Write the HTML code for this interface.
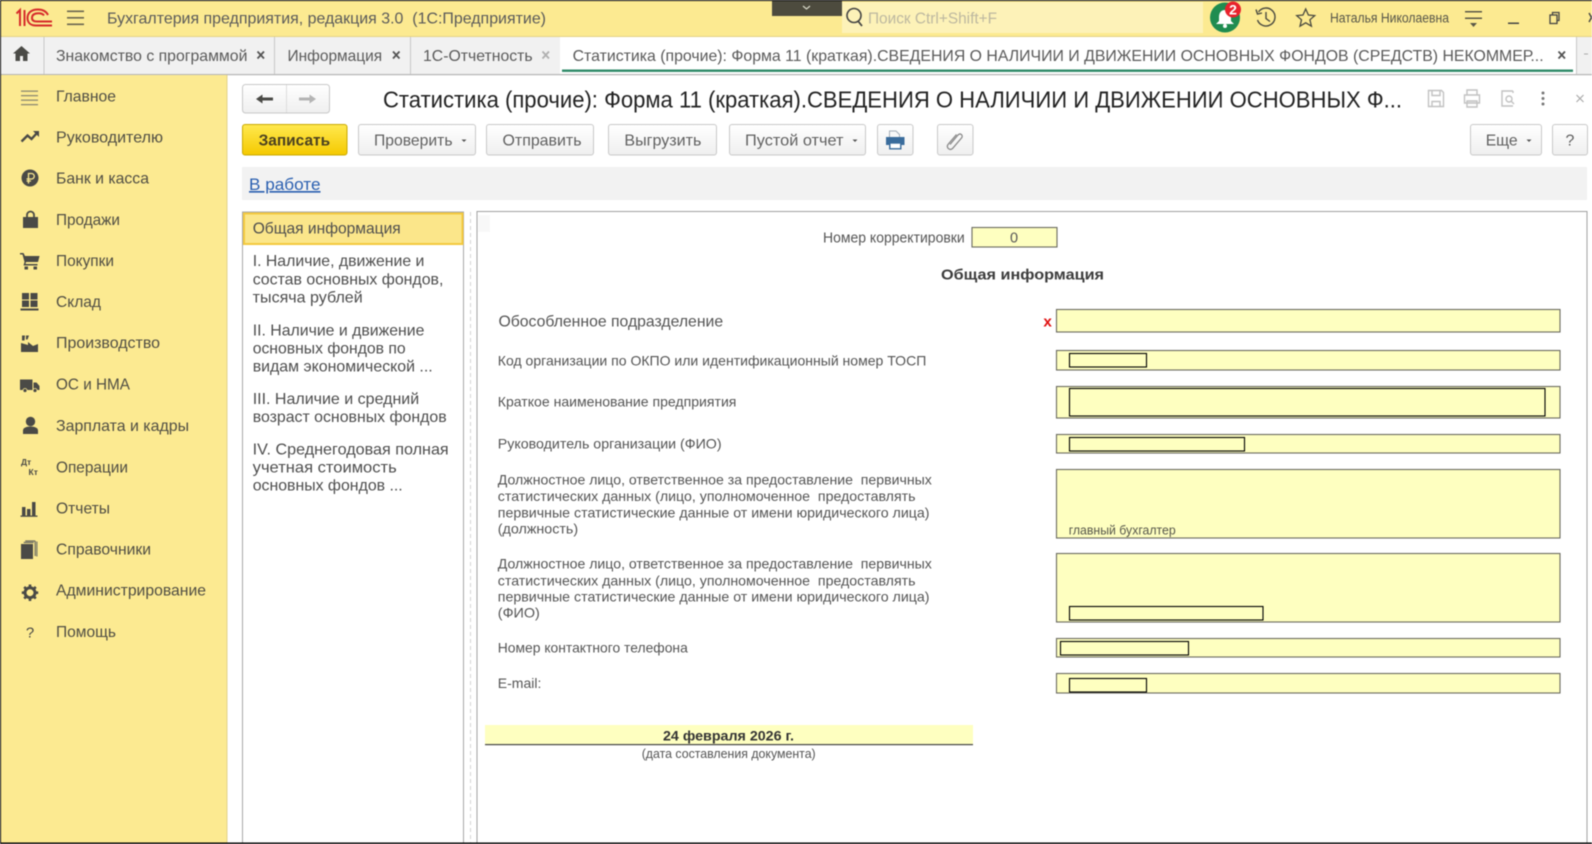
<!DOCTYPE html>
<html lang="ru"><head><meta charset="utf-8"><title>Статистика (прочие): Форма 11 (краткая)</title>
<style>
html,body{margin:0;padding:0;width:1592px;height:844px;overflow:hidden;background:#fff}
svg{display:block;position:absolute;left:0;top:0;filter:blur(.45px)}
text{font-family:"Liberation Sans",sans-serif;white-space:pre;fill:#4b4b45}
.s{font-size:16px;fill:#504e44}
.t{font-size:16px;fill:#5a5a5a}
.b{font-size:16px;fill:#606060}
.l{font-size:16px;fill:#4e4e4e}
.f{font-size:14px;fill:#555}
.i{fill:#4a4a46}
.y{fill:#feffc0;stroke:#6a6a60;stroke-width:1.1}
.r{fill:none;stroke:#000;stroke-width:1.1}
.btn{fill:url(#gb);stroke:#c8c8c8;stroke-width:1}
</style></head><body>
<svg width="1592" height="844" viewBox="0 0 1592 844" xmlns="http://www.w3.org/2000/svg">
<defs>
<linearGradient id="gb" x1="0" y1="0" x2="0" y2="1"><stop offset="0" stop-color="#fff"/><stop offset="1" stop-color="#efefef"/></linearGradient>
<linearGradient id="gy" x1="0" y1="0" x2="0" y2="1"><stop offset="0" stop-color="#ffe94f"/><stop offset="1" stop-color="#f5c900"/></linearGradient>
</defs>
<rect width="1592" height="844" fill="#fff"/>
<!-- header -->
<rect x="0" y="0" width="1592" height="36" fill="#fcea91"/>
<rect x="0" y="36" width="1592" height="1" fill="#e4d286"/>
<g fill="none" stroke="#d62b2b" stroke-width="2">
<path d="M16.500 13.500l3.500-3.500v16M24.500 10v16"/>
<path d="M48 15C46 11 42 9.500 38 9.500C31 9.500 27.500 13 27.500 18C27.500 23 31 25.500 36 25.500H52"/>
<path d="M44 15.500C43 14 41 13.200 38.500 13.200C34 13.200 32 15 32 18C32 20.500 34 21.500 37 21.500H52"/>
</g>
<g fill="#6a6650"><rect x="67" y="10.500" width="17" height="1.600"/><rect x="67" y="17" width="17" height="1.600"/><rect x="67" y="23.500" width="17" height="1.600"/></g>
<text x="107" y="23.500" class="t" textLength="439" lengthAdjust="spacingAndGlyphs">Бухгалтерия предприятия, редакция 3.0  (1С:Предприятие)</text>
<rect x="772" y="0" width="70" height="16" fill="#4d4b3e"/>
<path d="M803 6l3.500 3 3.500-3" fill="none" stroke="#d8d8c8" stroke-width="1.200"/>
<rect x="842" y="2" width="361" height="31" fill="#fdf2b8"/>
<circle cx="854" cy="15.500" r="7" fill="none" stroke="#444" stroke-width="1.600"/><path d="M858 21l4 5" stroke="#444" stroke-width="1.800"/>
<text x="868" y="23.500" style="font-size:16px;fill:#bdb8a0" textLength="129" lengthAdjust="spacingAndGlyphs">Поиск Ctrl+Shift+F</text>
<circle cx="1225" cy="17.500" r="15" fill="#1e8c50"/>
<path d="M1225 10c-4 0-6 3-6 7v4l-3 3h18l-3-3v-4c0-4-2-7-6-7z" fill="#fff"/><circle cx="1225" cy="26" r="2" fill="#fff"/>
<circle cx="1233" cy="9.500" r="8" fill="#e8222c"/>
<text x="1233" y="14.500" text-anchor="middle" style="font-size:14px;font-weight:bold;fill:#fff">2</text>
<g fill="none" stroke="#4a4a40" stroke-width="1.400"><path d="M1258.500 12a9 9 0 1 1-1 8"/><path d="M1256 9.500l1.500 4.500 4.500-1"/><path d="M1266 12v6.500l4 3"/></g>
<path d="M1305.700 9l2.700 6 6.300.6-4.800 4.200 1.500 6.400-5.700-3.400-5.700 3.400 1.500-6.400-4.800-4.200 6.300-.6z" fill="none" stroke="#4a4a40" stroke-width="1.300"/>
<text x="1330" y="22.500" style="font-size:13.500px;fill:#57564a" textLength="119" lengthAdjust="spacingAndGlyphs">Наталья Николаевна</text>
<g fill="#5a5848"><rect x="1465" y="11" width="17" height="1.500"/><rect x="1465" y="17.500" width="17" height="1.500"/><path d="M1470 23h7l-3.500 4z"/></g>
<rect x="1508" y="22.500" width="11" height="1.500" fill="#444"/>
<g fill="none" stroke="#444" stroke-width="1.300"><rect x="1550" y="15" width="7" height="8.500"/><path d="M1552.500 15v-2.500h6.500v8h-2"/></g>
<path d="M1589 13l5 9M1594 13l-5 9" stroke="#444" stroke-width="1.400"/>
<!-- tabs -->
<rect x="0" y="37" width="1592" height="37" fill="#f1f1f1"/>
<rect x="560" y="37" width="1016" height="37" fill="#fff"/>
<rect x="0" y="74" width="1592" height="1.200" fill="#b5b5b5"/>
<g fill="#c8c8c8"><rect x="43.500" y="37" width="1" height="37"/><rect x="274" y="37" width="1" height="37"/><rect x="410" y="37" width="1" height="37"/><rect x="1576" y="37" width="1" height="37"/></g>
<path d="M21.500 46l-8.500 7.500h2.500v7.500h4.500v-5h3v5h4.500v-7.500h2.500z" class="i"/>
<text x="56" y="61" class="t" textLength="191.400" lengthAdjust="spacingAndGlyphs">Знакомство с программой</text>
<text x="287.500" y="61" class="t" textLength="94.600" lengthAdjust="spacingAndGlyphs">Информация</text>
<text x="423" y="61" class="t" textLength="109.600" lengthAdjust="spacingAndGlyphs">1С-Отчетность</text>
<text x="572.600" y="61" class="t" textLength="971" lengthAdjust="spacingAndGlyphs">Статистика (прочие): Форма 11 (краткая).СВЕДЕНИЯ О НАЛИЧИИ И ДВИЖЕНИИ ОСНОВНЫХ ФОНДОВ (СРЕДСТВ) НЕКОММЕР...</text>
<g fill="none" stroke-width="1.800"><path d="M257.500 51.500l6.500 7M264 51.500l-6.500 7" stroke="#555"/><path d="M393 51.500l6.500 7M399.500 51.500l-6.500 7" stroke="#555"/><path d="M542.500 51.500l6.500 7M549 51.500l-6.500 7" stroke="#b0b0b0"/><path d="M1558.500 51.500l6.500 7M1565 51.500l-6.500 7" stroke="#555"/></g>
<rect x="562" y="69.500" width="1011" height="2.400" fill="#2f8a68"/>
<path d="M1584 54h4" stroke="#aaa" stroke-width="1"/>
<!-- sidebar -->
<rect x="0" y="75" width="226.500" height="769" fill="#fcea91"/>
<rect x="226.500" y="75" width="1" height="769" fill="#e2d28c"/>
<g fill="#8d8a72"><rect x="21" y="90.500" width="17" height="1.300"/><rect x="21" y="95" width="17" height="1.300"/><rect x="21" y="99.500" width="17" height="1.300"/><rect x="21" y="104" width="17" height="1.300"/></g>
<text x="56" y="101.500" class="s" textLength="60" lengthAdjust="spacingAndGlyphs">Главное</text>
<path d="M21.500 141.500l6-6 4 3.500 5-5.500" fill="none" stroke="#4a4a46" stroke-width="2.400"/><path d="M33 131h6v6z" class="i"/>
<text x="56" y="142.500" class="s" textLength="107" lengthAdjust="spacingAndGlyphs">Руководителю</text>
<circle cx="30" cy="178" r="8.500" class="i"/><path d="M28.500 183.500v-10h3a2.600 2.600 0 0 1 0 5.500h-5M26.500 181h4.500" fill="none" stroke="#fcea91" stroke-width="1.300"/>
<text x="56" y="183.500" class="s" textLength="93" lengthAdjust="spacingAndGlyphs">Банк и касса</text>
<path d="M23 217h15v11h-15z" class="i"/><path d="M27 218v-3a3.500 3.500 0 0 1 7 0v3" fill="none" stroke="#4a4a46" stroke-width="1.800"/>
<text x="56" y="225" class="s" textLength="64" lengthAdjust="spacingAndGlyphs">Продажи</text>
<path d="M20 253h3.500l1.500 3h14.500l-1.500 6h-12l-.5 2h12v1.500h-14l1-3.500-2-7.500h-2.500z" class="i"/><path d="M25 256h14.500l-2 6h-11z" class="i"/><rect x="24.500" y="266.500" width="3.500" height="3" class="i"/><rect x="33.500" y="266.500" width="3.500" height="3" class="i"/>
<text x="56" y="266" class="s" textLength="58" lengthAdjust="spacingAndGlyphs">Покупки</text>
<g class="i"><rect x="22" y="293" width="7" height="6.500"/><rect x="30.500" y="293" width="7" height="6.500"/><rect x="22" y="300.500" width="7" height="6.500"/><rect x="30.500" y="300.500" width="7" height="6.500"/><rect x="20.500" y="308.500" width="18" height="2"/></g>
<text x="56" y="307" class="s" textLength="45" lengthAdjust="spacingAndGlyphs">Склад</text>
<path d="M21 352v-9l7 2v-3l5 4 5-2v8zM22 335.500h3l-.5 5h-2.500zM26 335.500h3l-1.500 4h-1.500z" class="i"/>
<text x="56" y="348" class="s" textLength="104" lengthAdjust="spacingAndGlyphs">Производство</text>
<path d="M20 379.500h12.500v10.500h-12.500zM33.500 382.500h3l3 3.500v4h-6z" class="i"/><circle cx="25" cy="390.500" r="2" class="i" stroke="#fcea91" stroke-width=".8"/><circle cx="35" cy="390.500" r="2" class="i" stroke="#fcea91" stroke-width=".8"/>
<text x="56" y="389.500" class="s" textLength="74" lengthAdjust="spacingAndGlyphs">ОС и НМА</text>
<circle cx="30.500" cy="421.500" r="4.700" class="i"/><path d="M23 434v-3.500c0-2.500 3-4 7.500-4s7.500 1.500 7.500 4v3.500z" class="i"/>
<text x="56" y="431" class="s" textLength="133" lengthAdjust="spacingAndGlyphs">Зарплата и кадры</text>
<text x="21" y="465" style="font-size:8.500px;font-weight:bold;fill:#4a4a46">Дт</text>
<text x="28.500" y="475" style="font-size:8.500px;font-weight:bold;fill:#4a4a46">Кт</text>
<text x="56" y="472.500" class="s" textLength="72" lengthAdjust="spacingAndGlyphs">Операции</text>
<g class="i"><rect x="22" y="507" width="3.500" height="8.500"/><rect x="27" y="509" width="3.500" height="6.500"/><rect x="32" y="502" width="3.500" height="13.500"/><rect x="20.500" y="515.500" width="17" height="1.300"/></g>
<text x="56" y="513.500" class="s" textLength="54" lengthAdjust="spacingAndGlyphs">Отчеты</text>
<path d="M21 544h12v15h-12z" class="i"/><path d="M33.700 542.500h-10M35.200 541v15M35.200 541h-10" fill="none" stroke="#6a6a60" stroke-width="1.200"/><rect x="36.300" y="541.500" width="1.200" height="15" fill="#7a7a68"/>
<text x="56" y="554.500" class="s" textLength="95" lengthAdjust="spacingAndGlyphs">Справочники</text>
<circle cx="30" cy="592.700" r="5" fill="none" stroke="#4a4a46" stroke-width="3"/><g stroke="#4a4a46" stroke-width="2.600"><path d="M30 584.500v3M30 598v3M21.800 592.700h3M35.200 592.700h3M24.200 586.900l2.100 2.100M33.700 596.400l2.100 2.100M24.200 598.500l2.100-2.100M33.700 589l2.100-2.100"/></g>
<text x="56" y="595.500" class="s" textLength="150" lengthAdjust="spacingAndGlyphs">Администрирование</text>
<text x="30" y="637.500" text-anchor="middle" style="font-size:15px;fill:#4a4a46">?</text>
<text x="56" y="637" class="s" textLength="60" lengthAdjust="spacingAndGlyphs">Помощь</text>
<!-- command bar -->
<rect x="242.500" y="84.500" width="87" height="28.500" rx="3" class="btn"/><rect x="286" y="85" width="1" height="27.500" fill="#ddd"/>
<path d="M256 99l6.500-4.500v3h10.500v3h-10.500v3z" fill="#4a4a46"/><path d="M316 99l-6.500-4.500v3h-10.500v3h10.500v3z" fill="#b4b4b4"/>
<text x="383" y="107.500" style="font-size:23.500px;fill:#222" textLength="1019" lengthAdjust="spacingAndGlyphs">Статистика (прочие): Форма 11 (краткая).СВЕДЕНИЯ О НАЛИЧИИ И ДВИЖЕНИИ ОСНОВНЫХ Ф...</text>
<g fill="none" stroke="#c2c2c2" stroke-width="1.400"><path d="M1428.500 90.500h13l2 2v14h-15zM1432 90.500v5h8v-5M1432 106.500v-5h8v5"/><path d="M1467 95v-5h10v5M1464.500 95h15v8h-15zM1467 101h10v6h-10z"/><path d="M1513 91h-11v15h11M1513 91v2"/><circle cx="1509" cy="99" r="3"/><path d="M1511 101l3 3"/></g>
<g fill="#777"><circle cx="1543" cy="93" r="1.500"/><circle cx="1543" cy="98.500" r="1.500"/><circle cx="1543" cy="104" r="1.500"/></g>
<path d="M1576.500 95l7 7M1583.500 95l-7 7" stroke="#aaa" stroke-width="1.200"/>
<!-- buttons -->
<rect x="242.500" y="124.500" width="104.500" height="30.500" rx="2.500" fill="url(#gy)" stroke="#c9a900"/>
<text x="258.600" y="145.500" style="font-size:16px;font-weight:bold;fill:#4a4020" textLength="71.500" lengthAdjust="spacingAndGlyphs">Записать</text>
<rect x="358.500" y="124.500" width="117" height="30.500" rx="2.500" class="btn"/>
<text x="374" y="145.500" class="b" textLength="78.500" lengthAdjust="spacingAndGlyphs">Проверить</text><path d="M461.500 139.500h5l-2.500 2.500z" fill="#555"/>
<rect x="486.500" y="124.500" width="107" height="30.500" rx="2.500" class="btn"/>
<text x="502.500" y="145.500" class="b" textLength="79" lengthAdjust="spacingAndGlyphs">Отправить</text>
<rect x="608.500" y="124.500" width="108" height="30.500" rx="2.500" class="btn"/>
<text x="624.400" y="145.500" class="b" textLength="77" lengthAdjust="spacingAndGlyphs">Выгрузить</text>
<rect x="729.500" y="124.500" width="136" height="30.500" rx="2.500" class="btn"/>
<text x="745" y="145.500" class="b" textLength="98.500" lengthAdjust="spacingAndGlyphs">Пустой отчет</text><path d="M852.500 139.500h5l-2.500 2.500z" fill="#555"/>
<rect x="877.500" y="124.500" width="35.500" height="30.500" rx="2.500" class="btn"/>
<path d="M889.500 137.500v-6.500h6.500l3.500 3.500v3" fill="#f8f8f8" stroke="#a4aeb8"/><path d="M886 137h18.500v8h-3.500v-2h-11.500v2h-3.500z" fill="#3a6c9c"/><rect x="889.800" y="143" width="11" height="5.800" fill="#fff" stroke="#3a6c9c" stroke-width="1.400"/>
<rect x="937.500" y="124.500" width="35.500" height="30.500" rx="2.500" class="btn"/>
<path d="M950 144.500l8-9.500c2.500-2.500 5.500.5 3.500 3l-9 10.500c-3 2.500-6.500-1-4.500-4l8.500-10" fill="none" stroke="#8a8a8a" stroke-width="1.300"/>
<rect x="1470.500" y="124.500" width="71" height="30.500" rx="2.500" class="btn"/>
<text x="1485.700" y="145.500" class="b" textLength="32" lengthAdjust="spacingAndGlyphs">Еще</text><path d="M1526.500 139.500h5l-2.500 2.500z" fill="#555"/>
<rect x="1552.500" y="124.500" width="35" height="30.500" rx="2.500" class="btn"/>
<text x="1570" y="145.500" text-anchor="middle" class="b">?</text>
<!-- status -->
<rect x="242" y="167" width="1345" height="33" fill="#f2f2f2"/>
<text x="249" y="190" style="font-size:16.500px;fill:#2a5fb0;text-decoration:underline" textLength="71.500" lengthAdjust="spacingAndGlyphs">В работе</text>
<!-- left list -->
<rect x="242.500" y="212" width="221" height="640" fill="#fff" stroke="#a8a8a8"/>
<rect x="244" y="213.500" width="218.500" height="30.500" fill="#fbe68a" stroke="#f3c93e" stroke-width="2"/>
<text x="252.700" y="233.500" class="l" textLength="148" lengthAdjust="spacingAndGlyphs">Общая информация</text>
<text x="252.700" y="266" class="l" textLength="171.700" lengthAdjust="spacingAndGlyphs">I. Наличие, движение и</text>
<text x="252.700" y="284.500" class="l" textLength="190.700" lengthAdjust="spacingAndGlyphs">состав основных фондов,</text>
<text x="252.700" y="302.500" class="l" textLength="110" lengthAdjust="spacingAndGlyphs">тысяча рублей</text>
<text x="252.700" y="335.500" class="l" textLength="171.700" lengthAdjust="spacingAndGlyphs">II. Наличие и движение</text>
<text x="252.700" y="353.500" class="l" textLength="153" lengthAdjust="spacingAndGlyphs">основных фондов по</text>
<text x="252.700" y="371.500" class="l" textLength="180" lengthAdjust="spacingAndGlyphs">видам экономической ...</text>
<text x="252.700" y="404" class="l" textLength="166.500" lengthAdjust="spacingAndGlyphs">III. Наличие и средний</text>
<text x="252.700" y="422" class="l" textLength="194" lengthAdjust="spacingAndGlyphs">возраст основных фондов</text>
<text x="252.700" y="454.500" class="l" textLength="196" lengthAdjust="spacingAndGlyphs">IV. Среднегодовая полная</text>
<text x="252.700" y="472.500" class="l" textLength="144" lengthAdjust="spacingAndGlyphs">учетная стоимость</text>
<text x="252.700" y="490.500" class="l" textLength="150" lengthAdjust="spacingAndGlyphs">основных фондов ...</text>
<path d="M470.500 212v632" stroke="#d4d4d4" stroke-dasharray="4 3"/>
<!-- panel -->
<rect x="477" y="211.500" width="1110" height="640" fill="#fff" stroke="#a0a0a0"/>
<rect x="478" y="215" width="12" height="17" fill="#f8f8f8"/>
<text x="823" y="242.500" class="f" style="font-size:14.500px" textLength="141.700" lengthAdjust="spacingAndGlyphs">Номер корректировки</text>
<rect x="972" y="227.500" width="85" height="19.500" class="y"/>
<text x="1014" y="242.500" text-anchor="middle" class="f" style="font-size:14.500px">0</text>
<text x="941" y="279.500" style="font-size:15px;font-weight:bold;fill:#3c3c3c" textLength="163" lengthAdjust="spacingAndGlyphs">Общая информация</text>
<text x="498.500" y="326.500" class="f" style="font-size:16px" textLength="224.600" lengthAdjust="spacingAndGlyphs">Обособленное подразделение</text>
<text x="497.800" y="365.500" class="f" textLength="428.500" lengthAdjust="spacingAndGlyphs">Код организации по ОКПО или идентификационный номер ТОСП</text>
<text x="497.800" y="406.500" class="f" textLength="238.600" lengthAdjust="spacingAndGlyphs">Краткое наименование предприятия</text>
<text x="497.800" y="448.500" class="f" textLength="223.800" lengthAdjust="spacingAndGlyphs">Руководитель организации (ФИО)</text>
<text x="497.800" y="484.500" class="f" textLength="434" lengthAdjust="spacingAndGlyphs">Должностное лицо, ответственное за предоставление  первичных</text>
<text x="497.800" y="501" class="f" textLength="417.700" lengthAdjust="spacingAndGlyphs">статистических данных (лицо, уполномоченное  предоставлять</text>
<text x="497.800" y="517.500" class="f" textLength="431.700" lengthAdjust="spacingAndGlyphs">первичные статистические данные от имени юридического лица)</text>
<text x="497.800" y="533.500" class="f" textLength="80.300" lengthAdjust="spacingAndGlyphs">(должность)</text>
<text x="497.800" y="568.500" class="f" textLength="434" lengthAdjust="spacingAndGlyphs">Должностное лицо, ответственное за предоставление  первичных</text>
<text x="497.800" y="585.500" class="f" textLength="417.700" lengthAdjust="spacingAndGlyphs">статистических данных (лицо, уполномоченное  предоставлять</text>
<text x="497.800" y="601.500" class="f" textLength="431.700" lengthAdjust="spacingAndGlyphs">первичные статистические данные от имени юридического лица)</text>
<text x="497.800" y="617.500" class="f" textLength="42" lengthAdjust="spacingAndGlyphs">(ФИО)</text>
<text x="497.800" y="652.500" class="f" textLength="190" lengthAdjust="spacingAndGlyphs">Номер контактного телефона</text>
<text x="497.800" y="688" class="f" textLength="43.600" lengthAdjust="spacingAndGlyphs">E-mail:</text>
<text x="1043.400" y="326.500" style="font-size:15px;font-weight:bold;fill:#e01010" textLength="8.500" lengthAdjust="spacingAndGlyphs">x</text>
<rect x="1056.500" y="309.500" width="503.500" height="22.500" class="y"/>
<rect x="1056.500" y="350.500" width="503.500" height="19.500" class="y"/>
<rect x="1056.500" y="386.500" width="503.500" height="31.500" class="y"/>
<rect x="1056.500" y="434.500" width="503.500" height="18.500" class="y"/>
<rect x="1056.500" y="469.500" width="503.500" height="68.500" class="y"/>
<rect x="1056.500" y="553.500" width="503.500" height="68.500" class="y"/>
<rect x="1056.500" y="638.500" width="503.500" height="18.500" class="y"/>
<rect x="1056.500" y="673.500" width="503.500" height="19.500" class="y"/>
<rect x="1069.500" y="353.500" width="77" height="13.500" class="r"/>
<rect x="1069.500" y="388.500" width="475.500" height="27.500" class="r"/>
<rect x="1069.500" y="437.500" width="175" height="13.500" class="r"/>
<rect x="1069.500" y="606.500" width="193.500" height="13.500" class="r"/>
<rect x="1060.500" y="641.500" width="128" height="13.500" class="r"/>
<rect x="1069.500" y="678.500" width="77" height="13.500" class="r"/>
<text x="1068.700" y="534.500" style="font-size:13px;fill:#55554a" textLength="107" lengthAdjust="spacingAndGlyphs">главный бухгалтер</text>
<rect x="485" y="725" width="488" height="19" fill="#feffc0"/>
<rect x="485" y="744" width="488" height="1.200" fill="#444"/>
<text x="663" y="740.500" style="font-size:14px;font-weight:bold;fill:#333" textLength="131" lengthAdjust="spacingAndGlyphs">24 февраля 2026 г.</text>
<text x="641.700" y="758" style="font-size:12.500px;fill:#555" textLength="174" lengthAdjust="spacingAndGlyphs">(дата составления документа)</text>
<!-- frame -->
<rect x="0" y="0" width="1592" height="1" fill="#000"/>
<rect x="0" y="0" width="1" height="844" fill="#000"/>
<rect x="0" y="842.500" width="1592" height="1.500" fill="#000"/>
</svg>
</body></html>
